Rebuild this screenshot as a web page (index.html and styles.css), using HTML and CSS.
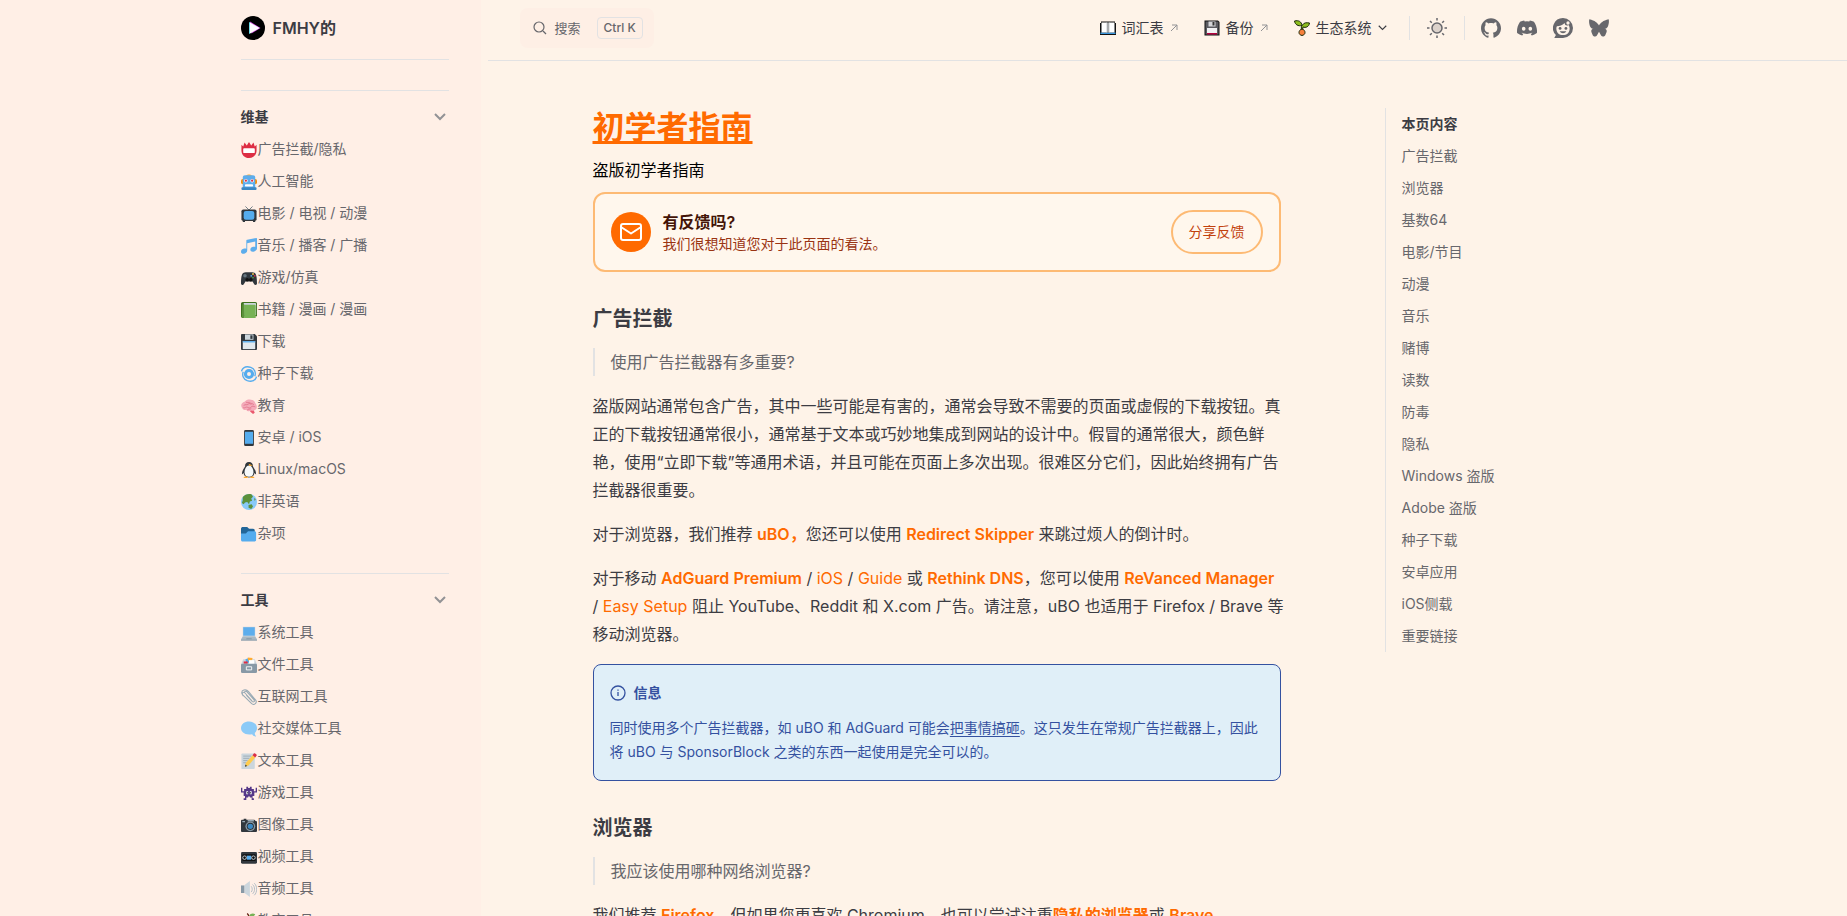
FILE: index.html
```html
<!DOCTYPE html>
<html lang="zh-CN">
<head>
    <meta charset="UTF-8">
    <meta name="viewport" content="width=device-width, initial-scale=1.0">
    <title>初学者指南 • FMHY</title>
    <link rel="stylesheet" href="styles.css">
</head>
<body>
<div class="layout">
    <aside class="sidebar">
        <a class="brand" href="#">
            <svg class="brand-logo" viewBox="0 0 24 24" aria-hidden="true">
                <circle cx="12" cy="12" r="12" fill="#000"/>
                <path d="M8 6v12l10-6z" fill="#16c5d8"/>
                <path d="M9 5.500l10.500 6.500-9 5.500z" fill="#d24be0"/>
                <path d="M8.600 6.200v11.600l10-5.800z" fill="#fff"/>
            </svg>
            <span>FMHY的</span>
        </a>

        <nav class="sidebar-nav" aria-label="侧边栏">
            <section class="group">
                <button class="group-title" type="button">
                    <span>维基</span>
                    <svg class="chevron" viewBox="0 0 12 8" aria-hidden="true"><path d="M1 1l5 5 5-5"/></svg>
                </button>
                <ul class="group-items">
                    <li><a href="#">
                        <svg viewBox="0 0 36 36"><path fill="#DD2E44" d="M18 36C8 36 1 29 1 19V6l4 4 3-9 5 7 5-8 5 8 5-7 3 9 4-4v13c0 10-7 17-17 17z"/><rect x="5" y="14" width="26" height="11" rx="2" fill="#fff"/></svg>
                        <span>广告拦截/隐私</span></a></li>
                    <li><a href="#">
                        <svg viewBox="0 0 36 36"><path fill="#FFAC33" d="M11 5c1-5 13-5 14 0z"/><rect y="11" width="36" height="12" rx="4" fill="#F4900C"/><path fill="#5DADEC" d="M4 8c0-3 2-5 5-5h18c3 0 5 2 5 5v24H4z"/><rect x="1" y="30" width="34" height="6" rx="2" fill="#3B88C3"/><circle cx="11" cy="15" r="4" fill="#fff"/><circle cx="25" cy="15" r="4" fill="#fff"/><circle cx="11" cy="15" r="2.500" fill="#DD2E44"/><circle cx="25" cy="15" r="2.500" fill="#DD2E44"/><rect x="9" y="23" width="18" height="5" rx="1" fill="#fff"/></svg>
                        <span>人工智能</span></a></li>
                    <li><a href="#">
                        <svg viewBox="0 0 36 36"><path d="M10 1l8 8 8-8" fill="none" stroke="#66757F" stroke-width="2"/><rect x="1" y="8" width="34" height="26" rx="4" fill="#31373D"/><rect x="6" y="11" width="24" height="20" rx="5" fill="#55ACEE"/><path d="M4 34h5v2H4zM27 34h5v2h-5z" fill="#31373D"/></svg>
                        <span>电影 / 电视 / 动漫</span></a></li>
                    <li><a href="#">
                        <svg viewBox="0 0 36 36"><path fill="#5DADEC" d="M34 0L14 4c-1 0-2 1-2 2v18c-1-.5-3-.7-5-.3-4 .8-7 3.500-7 7S3 36 7 35.300c4-.7 7-3.300 7-7V12l18-4v12c-1-.4-3-.6-5-.2-4 .8-6 3.500-6 6.500s3 5 7 4.400c4-.8 8-3.700 8-7V1.500C36 .4 35-.2 34 0z"/></svg>
                        <span>音乐 / 播客 / 广播</span></a></li>
                    <li><a href="#">
                        <svg viewBox="0 0 36 36"><path fill="#31373D" d="M6 6c4-1 20-1 24 0 5 1 6 14 6 24 0 5-5 5-7 1l-3-5H10l-3 5c-2 4-7 4-7-1C0 20 1 7 6 6z"/><circle cx="9" cy="13" r="4" fill="#66757F"/><circle cx="14" cy="22" r="4" fill="#111"/><circle cx="22" cy="22" r="4" fill="#111"/><circle cx="27" cy="9" r="2" fill="#FFCC4D"/><circle cx="31" cy="13" r="2" fill="#DD2E44"/><circle cx="27" cy="17" r="2" fill="#5C913B"/><circle cx="23" cy="13" r="2" fill="#55ACEE"/></svg>
                        <span>游戏/仿真</span></a></li>
                    <li><a href="#">
                        <svg viewBox="0 0 36 36"><path fill="#3E721D" d="M4 0h28c3 0 4 2 4 4v28H8l-4 4c-2 0-4-2-4-4V4c0-2 2-4 4-4z"/><path fill="#CCD6DD" d="M6 2h26c2 0 2 3 2 5v22H8z"/><path fill="#77B255" d="M7 6h23c2 0 3 1 3 3v27H7z"/><path fill="#5C913B" d="M3 5h4v31H4c-1 0-2-1-2-2z"/></svg>
                        <span>书籍 / 漫画 / 漫画</span></a></li>
                    <li><a href="#">
                        <svg viewBox="0 0 36 36"><path fill="#31373D" d="M3 0h28l5 5v28c0 2-1 3-3 3H3c-2 0-3-1-3-3V3c0-2 1-3 3-3z"/><path fill="#E1E8ED" d="M4 16h28v18H4z"/><path fill="#55ACEE" d="M4 16h28v3H4z"/><path fill="#CCD6DD" d="M9 1h19v12H9z"/><path fill="#31373D" d="M21 3h5v8h-5z"/></svg>
                        <span>下载</span></a></li>
                    <li><a href="#">
                        <svg viewBox="0 0 36 36"><g fill="none" stroke="#55ACEE"><circle cx="18" cy="18" r="8" stroke-width="7"/><path stroke-width="3" d="M1 12C4 3 12 0 22 3c9 3 12 12 9 20M35 24c-3 9-11 12-21 9C5 30 2 21 5 13"/></g></svg>
                        <span>种子下载</span></a></li>
                    <li><a href="#">
                        <svg viewBox="0 0 36 36"><path fill="#EA596E" d="M19 26l9 1 3 6-4 3-6-5z"/><path fill="#F4ABBA" d="M9 8c4-6 11-5 13-4 6 0 9 4 10 7 4 4 5 11 2 14-3 4-8 4-11 3-4 3-9 2-11-1-5 1-8-1-9-4-4-4-4-12 6-15z"/><path d="M6 17c4-4 7 0 10-3s6-1 7 1M11 9c3 3 6 0 9 2s6 1 9 4M5 22c5 1 6-3 10-1s6 2 8-1 6-1 9 0M14 27c2-3 6-1 9-3" fill="none" stroke="#E2768C" stroke-width="2"/></svg>
                        <span>教育</span></a></li>
                    <li><a href="#">
                        <svg viewBox="0 0 36 36"><rect x="7" width="22" height="36" rx="3" fill="#31373D"/><path fill="#55ACEE" d="M9 4h18v27H9z"/></svg>
                        <span>安卓 / iOS</span></a></li>
                    <li><a href="#">
                        <svg viewBox="0 0 36 36"><path fill="#31373D" d="M18 0c6 0 9 4 9 10 3 5 7 10 7 18l-4-3c0 6-5 10-12 10S6 31 6 25l-4 3c0-8 4-13 7-18 0-6 3-10 9-10z"/><path fill="#F5F8FA" d="M18 8c6 0 10 8 10 15s-4 10-10 10S8 30 8 23 12 8 18 8z"/><path fill="#FFAC33" d="M17 4l10 4-8 1zM6 36c0-3 3-4 9-3v3zM30 36c0-3-3-4-9-3v3z"/></svg>
                        <span>Linux/macOS</span></a></li>
                    <li><a href="#">
                        <svg viewBox="0 0 36 36"><circle cx="18" cy="18" r="18" fill="#88C9F9"/><path fill="#5C913B" d="M4 7C9 1 17-1 24 1l3 5-4 4 2 5-5 2-2 6-4-5-5 1-3 4-4-3 2-6zM17 25l7-2 3 5-4 6-6-3zM29 9l4 3-2 4z"/></svg>
                        <span>非英语</span></a></li>
                    <li><a href="#">
                        <svg viewBox="0 0 36 36"><path fill="#226699" d="M0 6c0-3 2-4 4-4h9c3 0 4 4 6 4h8c3 0 4 2 4 5v14H0z"/><path fill="#55ACEE" d="M0 17h9c5 0 4-5 9-5h13c2 0 3 2 3 4v15c0 2-1 4-4 4H4c-2 0-4-1-4-4z"/></svg>
                        <span>杂项</span></a></li>
                </ul>
            </section>

            <section class="group">
                <button class="group-title" type="button">
                    <span>工具</span>
                    <svg class="chevron" viewBox="0 0 12 8" aria-hidden="true"><path d="M1 1l5 5 5-5"/></svg>
                </button>
                <ul class="group-items">
                    <li><a href="#">
                        <svg viewBox="0 0 36 36"><path fill="#CCD6DD" d="M4 4h28v23H4z"/><path fill="#5DADEC" d="M5 5h26v19H5z"/><path fill="#AAB8C2" d="M4 26h28l4 6v3H0v-3z"/><path fill="#8899A6" d="M12 30h12v2H12zM0 33h36v2H0z"/></svg>
                        <span>系统工具</span></a></li>
                    <li><a href="#">
                        <svg viewBox="0 0 36 36"><path fill="#CCD6DD" d="M5 5h26l5 12H0z"/><path fill="#55ACEE" d="M10 5l6-2 3 9-7 3z"/><path fill="#FFAC33" d="M15 1l11 1-2 8-8-2z"/><path fill="#fff" d="M18 7h12v9H18z"/><path fill="#DD2E44" d="M6 10h9v5H6z"/><rect y="15" width="36" height="21" rx="3" fill="#8899A6"/><path fill="none" stroke="#fff" stroke-width="2" d="M12 22h12v7H12z"/></svg>
                        <span>文件工具</span></a></li>
                    <li><a href="#">
                        <svg viewBox="0 0 36 36"><path fill="none" stroke="#99AAB5" stroke-width="2.400" d="M25 27L9 9C6 5 1 9 4 13l20 20c6 5 13-2 9-8L17 6C11-1 0 2 2 10l3 6M9 9c-3-2 2-6 5-2l15 17c3 4-1 7-4 4L12 14"/></svg>
                        <span>互联网工具</span></a></li>
                    <li><a href="#">
                        <svg viewBox="0 0 36 36"><path fill="#8CCAF7" d="M18 1c10 0 18 6 18 15 0 5-2 8-5 11 0 3 1 5 3 8-4 0-7-1-9-5-16 3-25-5-25-14S8 1 18 1z"/></svg>
                        <span>社交媒体工具</span></a></li>
                    <li><a href="#">
                        <svg viewBox="0 0 36 36"><path fill="#CCD6DD" d="M3 1h28v32c0 2-1 3-3 3H1V3c0-1 1-2 2-2z"/><path stroke="#99AAB5" stroke-width="2" d="M5 7h18M5 12h14M5 17h10M5 22h7"/><path fill="#FFCC4D" d="M26 5l6 5-15 18-8 3 2-9z"/><path fill="#DD2E44" d="M29 1c2-2 8 3 6 5l-3 4-6-5z"/><path fill="#31373D" d="M9 31l1-5 4 3z"/></svg>
                        <span>文本工具</span></a></li>
                    <li><a href="#">
                        <svg viewBox="0 0 36 36"><path fill="#553788" d="M0 6h3v8h4V9h5V4h4v3h4V4h4v5h5v5h4V6h3v11h-6v8h-4v5h3v4h-5v-6h-4v-2h-4v2h-4v6H6v-4h3v-5H6v-8H0z"/><path fill="#fff" d="M12 14h4v7h-4zM20 14h4v7h-4z"/><path fill="#31373D" d="M14 16h2v3h-2zM20 16h2v3h-2z"/></svg>
                        <span>游戏工具</span></a></li>
                    <li><a href="#">
                        <svg viewBox="0 0 36 36"><path fill="#31373D" d="M3 6h3V4h6v2h18l3 3c2 0 3 1 3 3v19c0 2-1 3-3 3H3c-2 0-3-1-3-3V9c0-2 1-3 3-3z"/><path fill="#99AAB5" d="M15 7h14v3H15zM3 9h6v3H3z"/><circle cx="21" cy="21" r="11" fill="#8899A6"/><circle cx="21" cy="21" r="8" fill="#292F33"/><circle cx="21" cy="21" r="6" fill="#3B88C3"/></svg>
                        <span>图像工具</span></a></li>
                    <li><a href="#">
                        <svg viewBox="0 0 36 36"><rect y="7" width="36" height="26" rx="3" fill="#31373D"/><rect x="3" y="12" width="30" height="15" rx="2" fill="#111"/><rect x="13" y="15" width="10" height="9" fill="#55ACEE"/><circle cx="8" cy="19.500" r="4" fill="none" stroke="#CCD6DD" stroke-width="2"/><circle cx="28" cy="19.500" r="4" fill="none" stroke="#CCD6DD" stroke-width="2"/></svg>
                        <span>视频工具</span></a></li>
                    <li><a href="#">
                        <svg viewBox="0 0 36 36"><path fill="#8899A6" d="M0 10h8v17H0z"/><path fill="#CCD6DD" d="M8 9L20 0v36L8 27z"/><path fill="none" stroke="#AAB8C2" stroke-width="2" d="M23 12c3 3 3 10 0 13M26 8c6 5 6 16 0 21M30 5c7 7 7 20 0 27"/></svg>
                        <span>音频工具</span></a></li>
                    <li><a href="#">
                        <svg viewBox="0 0 36 36"><circle cx="18" cy="22" r="14" fill="#DD2E44"/><path d="M18 10c0-4-2-7-4-9" stroke="#662113" stroke-width="3" fill="none"/><path fill="#77B255" d="M18 8c2-7 9-8 14-5-3 5-8 8-14 5z"/></svg>
                        <span>教育工具</span></a></li>
                </ul>
            </section>
        </nav>
    </aside>

    <div class="page">
        <header class="navbar">
            <button class="search" type="button">
                <svg class="search-icon" viewBox="0 0 14 14" aria-hidden="true"><circle cx="6" cy="6" r="5"/><path d="M10 10l3 3"/></svg>
                <span>搜索</span>
                <kbd>Ctrl K</kbd>
            </button>

            <nav class="menu" aria-label="主导航">
                <a class="menu-link" href="#">
                    <svg class="menu-emoji" viewBox="0 0 32 32"><path fill="#111" d="M2 3h28v3h2v24H0V6h2z"/><path fill="#3a96dd" d="M1 25h30v3H1z"/><path fill="#fff" d="M3 5h12v20H3zM17 5h12v20H17z"/><path fill="#c8cdd2" d="M13 5h2v20h-2zM17 5h2v20h-2z"/></svg>
                    <span>词汇表</span>
                    <svg class="external" viewBox="0 0 8 8"><path d="M1 7l6-6M2 1h5v5"/></svg>
                </a>
                <a class="menu-link" href="#">
                    <svg class="menu-emoji" viewBox="0 0 32 32"><path fill="#111" d="M1 1h27l3 3v27H1z"/><path fill="#5b5b60" d="M3 3h24l2 2v24H3z"/><path fill="#d5d5d8" d="M9 3h14v10H9z"/><path fill="#333" d="M17 4h4v7h-4z"/><path fill="#f1f1f3" d="M6 16h20v11H6z"/><path fill="#b5003c" d="M6 26h20v3H6z"/></svg>
                    <span>备份</span>
                    <svg class="external" viewBox="0 0 8 8"><path d="M1 7l6-6M2 1h5v5"/></svg>
                </a>
                <button class="menu-link" type="button">
                    <svg class="menu-emoji" viewBox="0 0 32 32"><g stroke="#1b2a08" stroke-width="2"><path fill="#8fbf1f" d="M15 20c-1-6 0-8 2-10 3-5 8-5 14-4-1 8-8 10-13 8l-1 6z"/><path fill="#8fbf1f" d="M1 2c8-2 14 1 15 9C8 13 2 9 1 2z"/><path fill="#f7803c" d="M16 18c4 1 6 4 6 7s-2 5-6 6c-4-1-6-3-6-6s2-6 6-7z"/></g></svg>
                    <span>生态系统</span>
                    <svg class="caret" viewBox="0 0 12 8"><path d="M1 1l5 5 5-5"/></svg>
                </button>
            </nav>

            <div class="appearance">
                <button class="icon-button" type="button" aria-label="切换主题">
                    <svg viewBox="0 0 20 20"><circle cx="10" cy="10" r="5" fill="#dcd2cb" stroke="#67676c" stroke-width="1.500"/><path stroke="#67676c" stroke-width="1.500" d="M10 0v2.500M10 17.500V20M0 10h2.500M17.500 10H20M3 3l1.800 1.800M15.200 15.200L17 17M3 17l1.800-1.800M15.200 4.800L17 3"/></svg>
                </button>
            </div>

            <div class="social">
                <a class="icon-button" href="#" aria-label="GitHub"><svg viewBox="0 0 24 24"><path d="M12 .297c-6.630 0-12 5.373-12 12 0 5.303 3.438 9.800 8.205 11.385.6.113.82-.258.82-.577 0-.285-.01-1.040-.015-2.040-3.338.724-4.042-1.610-4.042-1.610C4.422 18.070 3.633 17.700 3.633 17.700c-1.087-.744.084-.729.084-.729 1.205.084 1.838 1.236 1.838 1.236 1.070 1.835 2.809 1.305 3.495.998.108-.776.417-1.305.76-1.605-2.665-.3-5.466-1.332-5.466-5.930 0-1.310.465-2.380 1.235-3.220-.135-.303-.54-1.523.105-3.176 0 0 1.005-.322 3.300 1.230.96-.267 1.980-.399 3-.405 1.020.006 2.040.138 3 .405 2.280-1.552 3.285-1.230 3.285-1.230.645 1.653.24 2.873.12 3.176.765.84 1.230 1.910 1.230 3.220 0 4.610-2.805 5.625-5.475 5.920.42.36.81 1.096.81 2.220 0 1.606-.015 2.896-.015 3.286 0 .315.21.69.825.57C20.565 22.092 24 17.592 24 12.297c0-6.627-5.373-12-12-12"/></svg></a>
                <a class="icon-button" href="#" aria-label="Discord"><svg viewBox="0 0 24 24"><path fill-rule="evenodd" d="M20.317 4.370a19.800 19.800 0 0 0-4.885-1.515c-.25.400-.500.880-.687 1.286a18 18 0 0 0-5.487 0c-.18-.420-.430-.890-.690-1.286a19.700 19.700 0 0 0-4.900 1.542C.533 9.046-.32 13.580.1 18.058c2.050 1.530 4.070 2.480 6.060 3.085.5-.650.930-1.340 1.300-2.070a12 12 0 0 1-1.960-.99l.48-.38c3.920 1.800 8.170 1.800 12.050 0l.48.38c-.62.380-1.280.700-1.960.98.380.740.820 1.430 1.310 2.080 2-.610 4.020-1.560 6.060-3.085.5-5.177-.838-9.674-3.603-13.688zM8.020 15.331c-1.183 0-2.157-1.086-2.157-2.419s.956-2.419 2.157-2.419c1.210 0 2.176 1.095 2.157 2.419 0 1.333-.956 2.419-2.157 2.419zm7.975 0c-1.183 0-2.157-1.086-2.157-2.419s.955-2.419 2.157-2.419c1.210 0 2.176 1.095 2.157 2.419 0 1.333-.946 2.419-2.157 2.419z"/></svg></a>
                <a class="icon-button" href="#" aria-label="Reddit"><svg viewBox="0 0 24 24"><path fill-rule="evenodd" d="M12 0a12 12 0 1 1 0 24H1.500l2-3.500A12 12 0 0 1 12 0zM4 12.500c0 5 3.500 8 8 8s8-3 8-8c0-1.500-.5-3-1.300-4.200-1.800 1.500-4.700.7-4.700-2.300-3 2.500-6 4-9.300 4-.5.800-.7 1.700-.7 2.500z"/><circle cx="8.500" cy="12.500" r="1.700"/><circle cx="15.500" cy="12.500" r="1.700"/><path d="M8 16h8c-1.500 3-6.500 3-8 0z"/><circle class="cutout" cx="18" cy="6" r="2"/></svg></a>
                <a class="icon-button" href="#" aria-label="Bluesky"><svg viewBox="0 0 24 24"><path d="M12 9c1.500-3 5-6 11.500-7.500.8 1.500.4 6.500-1 9-.7 1.400-2 2.500-4 2.500 2.500.5 3.300 2 2.500 4-.3 1-.7 1.300-1 2.500-.5 2.500-4 4-5.500 1.500L12 16.500 9.500 21C8 23.500 4.500 22 4 19.500c-.3-1.200-.7-1.500-1-2.500-.8-2 0-3.500 2.500-4-2 0-3.300-1.100-4-2.500-1.400-2.500-1.800-7.500-1-9C7 3 10.500 6 12 9z"/></svg></a>
            </div>
        </header>

        <div class="columns">
            <main class="doc">
                <h1><a href="#">初学者指南</a></h1>
                <p class="tagline">盗版初学者指南</p>

                <div class="feedback">
                    <span class="feedback-icon">
                        <svg viewBox="0 0 24 24" aria-hidden="true"><rect x="2" y="4" width="20" height="16" rx="2"/><path d="M2 7l10 6.500L22 7"/></svg>
                    </span>
                    <div class="feedback-text">
                        <strong>有反馈吗?</strong>
                        <span>我们很想知道您对于此页面的看法。</span>
                    </div>
                    <button class="feedback-button" type="button">分享反馈</button>
                </div>

                <h2>广告拦截</h2>
                <blockquote>使用广告拦截器有多重要?</blockquote>
                <p>盗版网站通常包含广告，其中一些可能是有害的，通常会导致不需要的页面或虚假的下载按钮。真正的下载按钮通常很小，通常基于文本或巧妙地集成到网站的设计中。假冒的通常很大，颜色鲜艳，使用“立即下载”等通用术语，并且可能在页面上多次出现。很难区分它们，因此始终拥有广告拦截器很重要。</p>
                <p>对于浏览器，我们推荐 <a href="#"><strong>uBO，</strong></a>您还可以使用 <a href="#"><strong>Redirect Skipper</strong></a> 来跳过烦人的倒计时。</p>
                <p>对于移动 <a href="#"><strong>AdGuard Premium</strong></a> / <a href="#">iOS</a> / <a href="#">Guide</a> 或 <a href="#"><strong>Rethink DNS</strong></a>，您可以使用 <a href="#"><strong>ReVanced Manager</strong></a> / <a href="#">Easy Setup</a> 阻止 YouTube、Reddit 和 X.com 广告。请注意，uBO 也适用于 Firefox / Brave 等移动浏览器。</p>

                <div class="info">
                    <div class="info-title">
                        <svg viewBox="0 0 16 16" aria-hidden="true"><circle cx="8" cy="8" r="7"/><path d="M8 7v4M8 4.500v1.200"/></svg>
                        <span>信息</span>
                    </div>
                    <p>同时使用多个广告拦截器，如 uBO 和 AdGuard 可能会<a href="#">把事情搞砸</a>。这只发生在常规广告拦截器上，因此将 uBO 与 SponsorBlock 之类的东西一起使用是完全可以的。</p>
                </div>

                <h2>浏览器</h2>
                <blockquote>我应该使用哪种网络浏览器?</blockquote>
                <p>我们推荐 <a href="#"><strong>Firefox</strong></a>，但如果您更喜欢 Chromium，也可以尝试注重<a href="#"><strong>隐私的浏览器</strong></a>或 <a href="#"><strong>Brave</strong></a>。</p>
            </main>

            <nav class="outline" aria-label="本页内容">
                <div class="outline-title">本页内容</div>
                <a href="#">广告拦截</a>
                <a href="#">浏览器</a>
                <a href="#">基数64</a>
                <a href="#">电影/节目</a>
                <a href="#">动漫</a>
                <a href="#">音乐</a>
                <a href="#">赌博</a>
                <a href="#">读数</a>
                <a href="#">防毒</a>
                <a href="#">隐私</a>
                <a href="#">Windows 盗版</a>
                <a href="#">Adobe 盗版</a>
                <a href="#">种子下载</a>
                <a href="#">安卓应用</a>
                <a href="#">iOS侧载</a>
                <a href="#">重要链接</a>
            </nav>
        </div>
    </div>
</div>
</body>
</html>
```
FILE: styles.css
```css
:root {
    --bg: #fef3e8;
    --bg-alt: #ffefe6;
    --text-1: #3c3c43;
    --text-2: #67676c;
    --text-3: #929295;
    --divider: #e2e2e3;
    --brand: #ff6a00;
    --gutter: calc((100vw - 1366px) / 2);
}
* {
    box-sizing: border-box;
}
body {
    margin: 0;
    height: 100vh;
    overflow: hidden;
    background: var(--bg);
    color: var(--text-1);
    font-family: Inter, "Noto Sans CJK SC", sans-serif;
    font-size: 16px;
    line-height: 24px;
}
a {
    color: inherit;
    text-decoration: none;
}
button {
    padding: 0;
    border: 0;
    background: none;
    color: inherit;
    font: inherit;
    cursor: pointer;
}
svg {
    display: block;
    flex-shrink: 0;
}
.layout {
    display: flex;
    height: 100vh;
}

/* sidebar */
.sidebar {
    flex: none;
    width: calc(var(--gutter) + 240px);
    padding: 0 32px 0 var(--gutter);
    overflow: hidden;
    background: var(--bg-alt);
}
.brand {
    display: flex;
    align-items: center;
    gap: 8px;
    height: 60px;
    padding-bottom: 4px;
    border-bottom: 1px solid var(--divider);
    font-weight: 600;
}
.brand-logo {
    width: 24px;
    height: 24px;
}
.sidebar-nav {
    padding-top: 30px;
}
.group {
    padding: 10px 0 24px;
    border-top: 1px solid var(--divider);
    font-size: 14px;
}
.group-title {
    display: flex;
    align-items: center;
    justify-content: space-between;
    width: 100%;
    height: 32px;
    padding-right: 3px;
    font-weight: 700;
}
.chevron {
    width: 12px;
    height: 8px;
    fill: none;
    stroke: var(--text-3);
    stroke-width: 2;
}
.group-items {
    margin: 0;
    padding: 0;
    list-style: none;
}
.group-items a {
    display: flex;
    align-items: center;
    height: 32px;
    padding-bottom: 1px;
    color: var(--text-2);
}
.group-items svg {
    width: 16px;
    height: 16px;
    margin: 3px 1px 0 0;
}

/* top bar */
.page {
    flex: 1;
    min-width: 0;
    overflow: hidden;
}
.navbar {
    display: flex;
    align-items: center;
    height: 61px;
    margin-left: 7px;
    padding: 0 calc(var(--gutter) - 10px) 4px 32px;
    border-bottom: 1px solid var(--divider);
    font-size: 14px;
}
.search {
    display: flex;
    align-items: center;
    height: 40px;
    padding: 0 11px 0 13px;
    border-radius: 8px;
    background: #feefe5;
    color: var(--text-2);
    font-size: 13px;
}
.search-icon {
    width: 14px;
    height: 14px;
    margin-right: 8px;
    fill: none;
    stroke: currentColor;
    stroke-width: 1.2;
}
.search kbd {
    margin-left: 16px;
    padding: 0 6px;
    border: 1px solid var(--divider);
    border-radius: 4px;
    font-family: inherit;
    font-size: 12px;
    font-weight: 500;
    line-height: 20px;
}
.menu {
    display: flex;
    gap: 26px;
    margin-left: auto;
}
.menu-link {
    display: flex;
    align-items: center;
    gap: 6px;
}
.menu-emoji {
    width: 16px;
    height: 16px;
}
.external {
    width: 8px;
    height: 8px;
    fill: none;
    stroke: var(--text-3);
}
.caret {
    width: 9px;
    height: 6px;
    fill: none;
    stroke: currentColor;
    stroke-width: 1.5;
}
.appearance {
    margin: 0 8px 0 22px;
    padding: 0 9px;
    border-left: 1px solid var(--divider);
    border-right: 1px solid var(--divider);
    line-height: 24px;
}
.icon-button {
    display: flex;
    align-items: center;
    justify-content: center;
    width: 36px;
    height: 24px;
}
.icon-button svg {
    width: 20px;
    height: 20px;
    fill: var(--text-2);
}
.icon-button .cutout {
    fill: var(--bg);
}
.social {
    display: flex;
}

/* document */
.columns {
    display: flex;
    align-items: flex-start;
    gap: 104px;
    padding: 47px 0 0 112px;
}
.doc {
    flex: 0 1 688px;
}
.doc a {
    color: var(--brand);
}
.doc strong {
    font-weight: 600;
}
.doc h1 {
    margin: 0 0 10px;
    font-size: 32px;
    font-weight: 700;
    line-height: 40px;
}
.doc h1 a {
    text-decoration: underline;
}
.doc h2 {
    margin: 31px 0 13px;
    font-size: 20px;
    font-weight: 700;
    line-height: 32px;
}
.doc p {
    margin: 16px -3px 16px 0;
    line-height: 28px;
}
.doc .tagline {
    margin: 0 0 10px;
    color: #000;
    line-height: 24px;
}
.doc blockquote {
    margin: 0;
    padding-left: 16px;
    border-left: 2px solid var(--divider);
    color: var(--text-2);
    line-height: 28px;
}
.feedback {
    display: flex;
    align-items: center;
    gap: 12px;
    height: 80px;
    padding: 0 16px;
    border: 2px solid #fdba74;
    border-radius: 12px;
    background: #fff7ed;
}
.feedback-icon {
    display: grid;
    place-items: center;
    width: 40px;
    height: 40px;
    border-radius: 50%;
    background: var(--brand);
}
.feedback-icon svg {
    width: 24px;
    height: 24px;
    fill: none;
    stroke: #fff;
    stroke-width: 2;
    stroke-linejoin: round;
}
.feedback-text {
    display: flex;
    flex: 1;
    flex-direction: column;
    color: #9a3412;
    font-size: 14px;
    line-height: 20px;
}
.feedback-text strong {
    color: #431407;
    font-size: 16px;
    line-height: 24px;
}
.feedback-button {
    height: 44px;
    padding: 0 16px;
    border: 2px solid #fdba74;
    border-radius: 22px;
    color: #c2410c;
    font-size: 14px;
}
.info {
    padding: 16px;
    border: 1px solid #3451a0;
    border-radius: 8px;
    background: #e0eff8;
    color: #3451a0;
    font-size: 14px;
}
.info-title {
    display: flex;
    align-items: center;
    gap: 8px;
    font-weight: 700;
}
.info-title svg {
    width: 16px;
    height: 16px;
    fill: none;
    stroke: currentColor;
    stroke-width: 1.3;
}
.doc .info p {
    margin: 11px 0 0;
    line-height: 24px;
}
.doc .info a {
    color: inherit;
    text-decoration: underline;
    text-underline-offset: 3px;
}

/* page outline */
.outline {
    display: flex;
    flex-direction: column;
    width: 224px;
    padding-left: 16px;
    border-left: 1px solid var(--divider);
    color: var(--text-2);
    font-size: 14px;
    line-height: 32px;
}
.outline-title {
    color: var(--text-1);
    font-weight: 700;
}
```
